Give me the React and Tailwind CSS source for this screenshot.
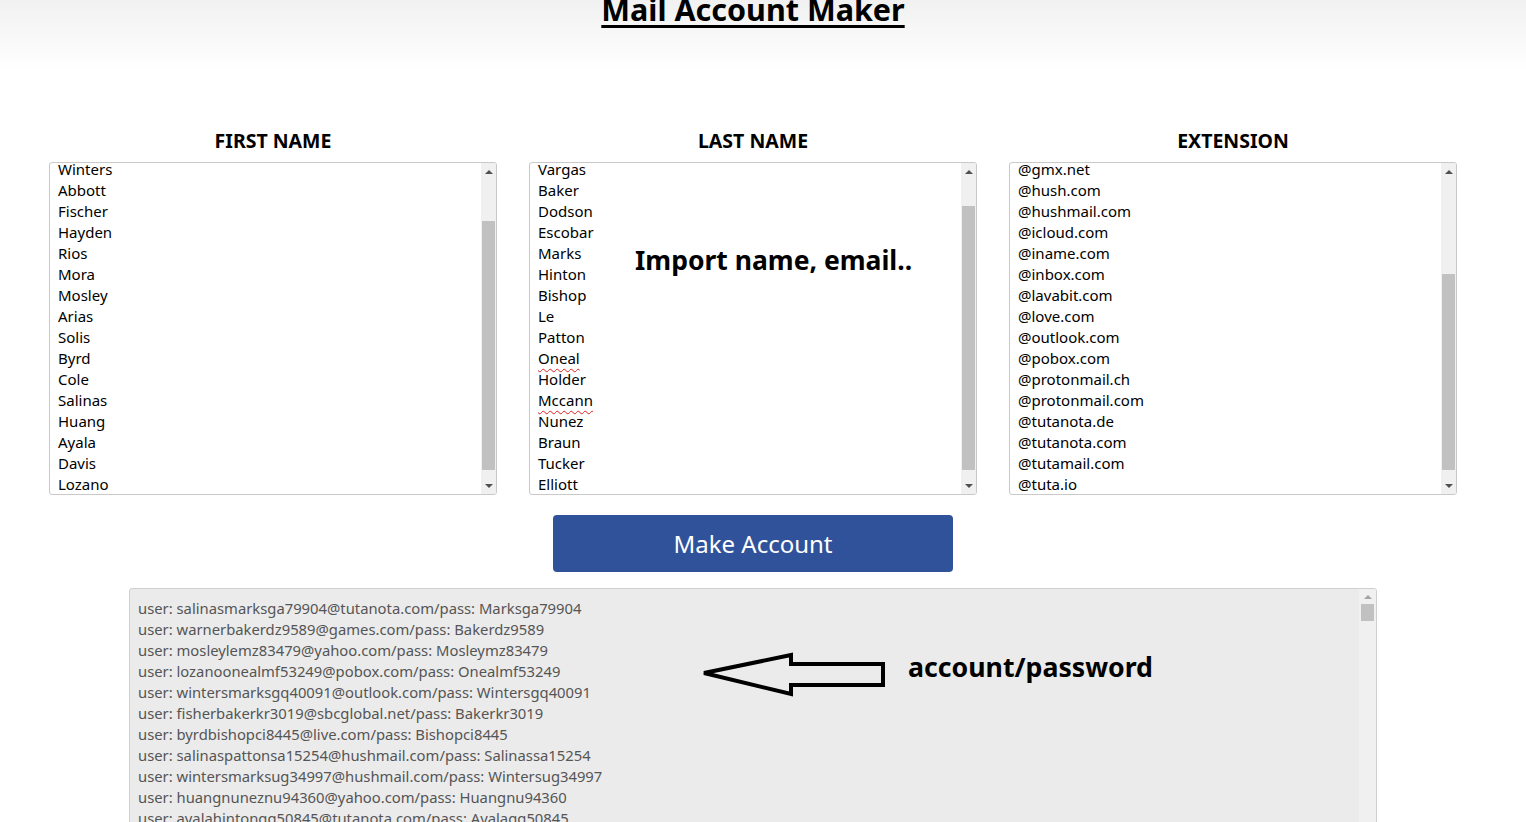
import React from "react";

const first = ["Winters","Abbott","Fischer","Hayden","Rios","Mora","Mosley","Arias","Solis","Byrd","Cole","Salinas","Huang","Ayala","Davis","Lozano"];
const last = ["Vargas","Baker","Dodson","Escobar","Marks","Hinton","Bishop","Le","Patton","Oneal","Holder","Mccann","Nunez","Braun","Tucker","Elliott"];
const ext = ["@gmx.net","@hush.com","@hushmail.com","@icloud.com","@iname.com","@inbox.com","@lavabit.com","@love.com","@outlook.com","@pobox.com","@protonmail.ch","@protonmail.com","@tutanota.de","@tutanota.com","@tutamail.com","@tuta.io"];
const out = [
  "user: salinasmarksga79904@tutanota.com/pass: Marksga79904",
  "user: warnerbakerdz9589@games.com/pass: Bakerdz9589",
  "user: mosleylemz83479@yahoo.com/pass: Mosleymz83479",
  "user: lozanoonealmf53249@pobox.com/pass: Onealmf53249",
  "user: wintersmarksgq40091@outlook.com/pass: Wintersgq40091",
  "user: fisherbakerkr3019@sbcglobal.net/pass: Bakerkr3019",
  "user: byrdbishopci8445@live.com/pass: Bishopci8445",
  "user: salinaspattonsa15254@hushmail.com/pass: Salinassa15254",
  "user: wintersmarksug34997@hushmail.com/pass: Wintersug34997",
  "user: huangnuneznu94360@yahoo.com/pass: Huangnu94360",
  "user: ayalahintongg50845@tutanota.com/pass: Ayalagg50845",
];
const misspelled = new Set(["Oneal", "Mccann"]);

function Scrollbar({ thumb }) {
  return (
    <div className="w-[15px] h-full bg-[#f0f0f0] flex flex-col">
      <div className="h-[17px] flex items-center justify-center">
        <div className="w-0 h-0 border-l-[4px] border-r-[4px] border-b-[4px] border-l-transparent border-r-transparent border-b-[#505050]" />
      </div>
      <div className="flex-1 relative">
        <div className={"absolute left-[1px] right-[1px] bg-[#c1c1c1] " + thumb} />
      </div>
      <div className="h-[17px] flex items-center justify-center">
        <div className="w-0 h-0 border-l-[4px] border-r-[4px] border-t-[4px] border-l-transparent border-r-transparent border-t-[#505050]" />
      </div>
    </div>
  );
}

function ListBox({ title, items, thumb, overlay }) {
  return (
    <div className="w-[448px] flex flex-col items-center">
      <h2 className="text-[19.5px] font-bold leading-[24px] text-black mb-[9px]">{title}</h2>
      <div className="relative w-[448px] h-[333px] border border-[#c9c9c9] rounded-[3px] bg-white flex overflow-hidden">
        <div className="flex-1 overflow-hidden pl-[8px]">
          <div className="mt-[-4px]">
            {items.map((it) => (
              <div key={it} className="h-[21px] leading-[21px] text-[15px] text-black">
                {misspelled.has(it) ? (
                  <span className="underline decoration-wavy decoration-[#e02020] decoration-1 underline-offset-[4px]">{it}</span>
                ) : it}
              </div>
            ))}
          </div>
        </div>
        <Scrollbar thumb={thumb} />
        {overlay}
      </div>
    </div>
  );
}

export default function App() {
  return (
    <div className="w-full min-h-[822px] bg-[linear-gradient(#f1f1f1,#ffffff_70px)] [font-family:'Noto_Sans',sans-serif] overflow-hidden">
      <div className="w-[1506px] flex flex-col items-center">
        <h1 className="mt-[-11px] text-[30.5px] font-bold leading-[40px] text-black underline decoration-[3px] underline-offset-[4px]">Mail Account Maker</h1>
        <div className="mt-[100px] flex gap-[32px]">
          <ListBox title="FIRST NAME" items={first} thumb="top-[41px] h-[249px]" />
          <ListBox
            title="LAST NAME"
            items={last}
            thumb="top-[26px] h-[264px]"
            overlay={
              <div className="absolute left-[105px] top-[80px] text-[26.5px] font-bold leading-[34px] text-black">Import name, email..</div>
            }
          />
          <ListBox title="EXTENSION" items={ext} thumb="top-[94px] h-[196px]" />
        </div>
        <button className="mt-[20px] w-[400px] h-[57px] rounded-[4px] bg-[#30529a] text-white text-[24px] leading-[57px]">Make Account</button>
        <div className="relative mt-[16px] w-[1248px] h-[260px] border border-[#cfcfcf] rounded-[3px] bg-[#ebebeb] flex overflow-hidden">
          <div className="flex-1 pt-[9px] pl-[8px]">
            {out.map((l) => (
              <div key={l} className="h-[21px] leading-[21px] text-[14.8px] text-[#555555]">{l}</div>
            ))}
          </div>
          <div className="w-[17px] h-full bg-[#f0f0f0] flex flex-col items-center">
            <div className="h-[15px] flex items-center justify-center">
              <div className="w-0 h-0 border-l-[4px] border-r-[4px] border-b-[4px] border-l-transparent border-r-transparent border-b-[#a3a3a3]" />
            </div>
            <div className="w-[13px] h-[17px] bg-[#c1c1c1]" />
          </div>
          <svg className="absolute left-[571px] top-[63px]" width="186" height="46" viewBox="0 0 186 46">
            <path d="M3 21 L90 3 L90 12 L182 12 L182 33 L90 33 L90 42 Z" fill="none" stroke="#000" strokeWidth="4" strokeLinejoin="miter" />
          </svg>
          <div className="absolute left-[778px] top-[61px] text-[26.7px] font-bold leading-[34px] text-black">account/password</div>
        </div>
      </div>
    </div>
  );
}
